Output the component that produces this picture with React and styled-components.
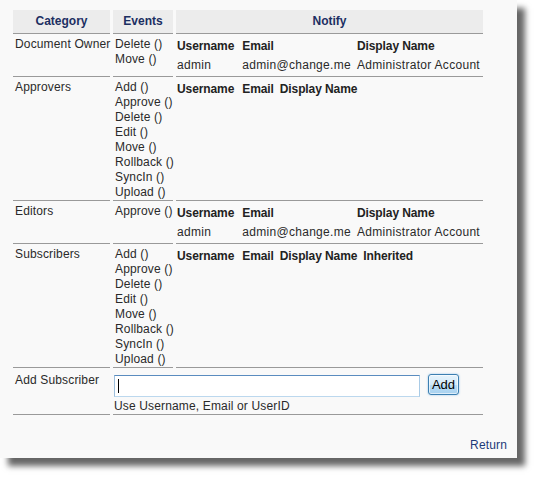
import styled, { createGlobalStyle } from "styled-components";

const ALL_EVENTS = [
  "Add ()",
  "Approve ()",
  "Delete ()",
  "Edit ()",
  "Move ()",
  "Rollback ()",
  "SyncIn ()",
  "Upload ()",
];

const ADMIN = {
  username: "admin",
  email: "admin@change.me",
  displayName: "Administrator Account",
};

const ROWS = [
  { category: "Document Owner", events: ["Delete ()", "Move ()"], users: [ADMIN] },
  { category: "Approvers", events: ALL_EVENTS, users: [] },
  { category: "Editors", events: ["Approve ()"], users: [ADMIN] },
  { category: "Subscribers", events: ALL_EVENTS, users: [], inherited: true },
];

const GlobalStyle = createGlobalStyle`
  html, body {
    margin: 0;
    background: #ffffff;
  }
  body {
    font-family: "Liberation Sans", Arial, sans-serif;
    font-size: 12px;
    color: #2a2a2a;
  }
`;

const Page = styled.div`
  width: 537px;
  height: 478px;
  overflow: hidden;
  background: #ffffff;
`;

const Panel = styled.div`
  width: 517px;
  height: 458px;
  box-sizing: border-box;
  padding: 10px 10px 5px 13px;
  background: #f9f9f9;
  box-shadow: 8px 8px 6px rgba(0, 0, 0, 0.6);
  display: flex;
  flex-direction: column;
`;

const Grid = styled.div`
  display: grid;
  grid-template-columns: 97px 60px 307px;
  column-gap: 3px;
`;

const HeadCell = styled.div`
  height: 24px;
  box-sizing: border-box;
  line-height: 23px;
  background: #ececec;
  border-bottom: 1px solid #9a9a9a;
  text-align: center;
  font-weight: bold;
  color: #1c2f62;
`;

const Cell = styled.div`
  grid-column: ${(p) => (p.$span ? `span ${p.$span}` : "auto")};
  padding: ${(p) => (p.$pt != null ? p.$pt : 3)}px 2px 0 ${(p) => (p.$pl != null ? p.$pl : 2)}px;
  border-bottom: 1px solid #9a9a9a;
  line-height: 15px;
  letter-spacing: 0.15px;
  white-space: nowrap;
`;

const EventLine = styled.div`
  line-height: 15px;
`;

const UserTable = styled.table`
  border-collapse: collapse;
  margin-bottom: 1px;

  th,
  td {
    padding: 2px 5px 2px 1px;
    line-height: 15px;
    text-align: left;
    vertical-align: top;
    white-space: nowrap;
  }

  td {
    letter-spacing: 0.3px;
  }

  th {
    font-weight: bold;
    color: #222222;
    letter-spacing: -0.1px;
  }

  th:first-child,
  td:first-child {
    padding-left: 1px;
    padding-right: 7px;
  }
`;

const InputRow = styled.div`
  display: flex;
  align-items: flex-start;
  gap: 8px;
  padding-top: 3px;
  margin-bottom: 2px;
`;

const InputBox = styled.div`
  position: relative;
  margin-top: 1px;

  &::after {
    content: "";
    position: absolute;
    left: 4px;
    top: 4px;
    width: 1px;
    height: 14px;
    background: #000;
  }
`;

const TextInput = styled.input`
  display: block;
  width: 306px;
  height: 22px;
  box-sizing: border-box;
  margin: 0;
  padding: 0 3px;
  border: 1px solid;
  border-color: #5a8cbf #a9cbe6 #bcd8ee #9ebfdc;
  background: #ffffff;
  caret-color: transparent;
  font-family: "Liberation Sans", Arial, sans-serif;
  font-size: 12px;
  outline: none;
`;

const AddButton = styled.button`
  width: 31px;
  height: 21px;
  box-sizing: border-box;
  padding: 0;
  border: 1px solid #3c7fb1;
  border-radius: 3px;
  background: linear-gradient(#e6f3fc 0%, #d3eaf9 50%, #b9dcf4 51%, #a9d2f0 100%);
  box-shadow: inset 0 0 0 1px rgba(255, 255, 255, 0.6), 0 0 2px rgba(60, 150, 220, 0.6);
  font-family: "Liberation Sans", Arial, sans-serif;
  font-size: 13px;
  color: #000;
  line-height: 18px;
`;

const Hint = styled.div`
  line-height: 15px;
`;

const Footer = styled.div`
  margin-top: auto;
  text-align: right;
  line-height: 15px;
`;

const ReturnLink = styled.a`
  color: #1d3a78;
  text-decoration: none;
  letter-spacing: 0.15px;
`;

function Users({ users, inherited }) {
  return (
    <UserTable>
      <thead>
        <tr>
          <th>Username</th>
          <th>Email</th>
          <th>Display Name</th>
          {inherited && <th>Inherited</th>}
        </tr>
      </thead>
      <tbody>
        {users.map((u) => (
          <tr key={u.username}>
            <td>{u.username}</td>
            <td>{u.email}</td>
            <td>{u.displayName}</td>
            {inherited && <td />}
          </tr>
        ))}
      </tbody>
    </UserTable>
  );
}

export default function App() {
  return (
    <Page>
      <GlobalStyle />
      <Panel>
        <Grid>
          <HeadCell>Category</HeadCell>
          <HeadCell>Events</HeadCell>
          <HeadCell>Notify</HeadCell>

          {ROWS.map((row) => [
            <Cell key={row.category + "-c"}>{row.category}</Cell>,
            <Cell key={row.category + "-e"}>
              {row.events.map((ev) => (
                <EventLine key={ev}>{ev}</EventLine>
              ))}
            </Cell>,
            <Cell key={row.category + "-n"} $pl={0}>
              <Users users={row.users} inherited={row.inherited} />
            </Cell>,
          ])}

          <Cell $pt={5}>Add Subscriber</Cell>
          <Cell $span={2} $pl={1}>
            <InputRow>
              <InputBox>
                <TextInput type="text" />
              </InputBox>
              <AddButton type="button">Add</AddButton>
            </InputRow>
            <Hint>Use Username, Email or UserID</Hint>
          </Cell>
        </Grid>
        <Footer>
          <ReturnLink href="#">Return</ReturnLink>
        </Footer>
      </Panel>
    </Page>
  );
}
